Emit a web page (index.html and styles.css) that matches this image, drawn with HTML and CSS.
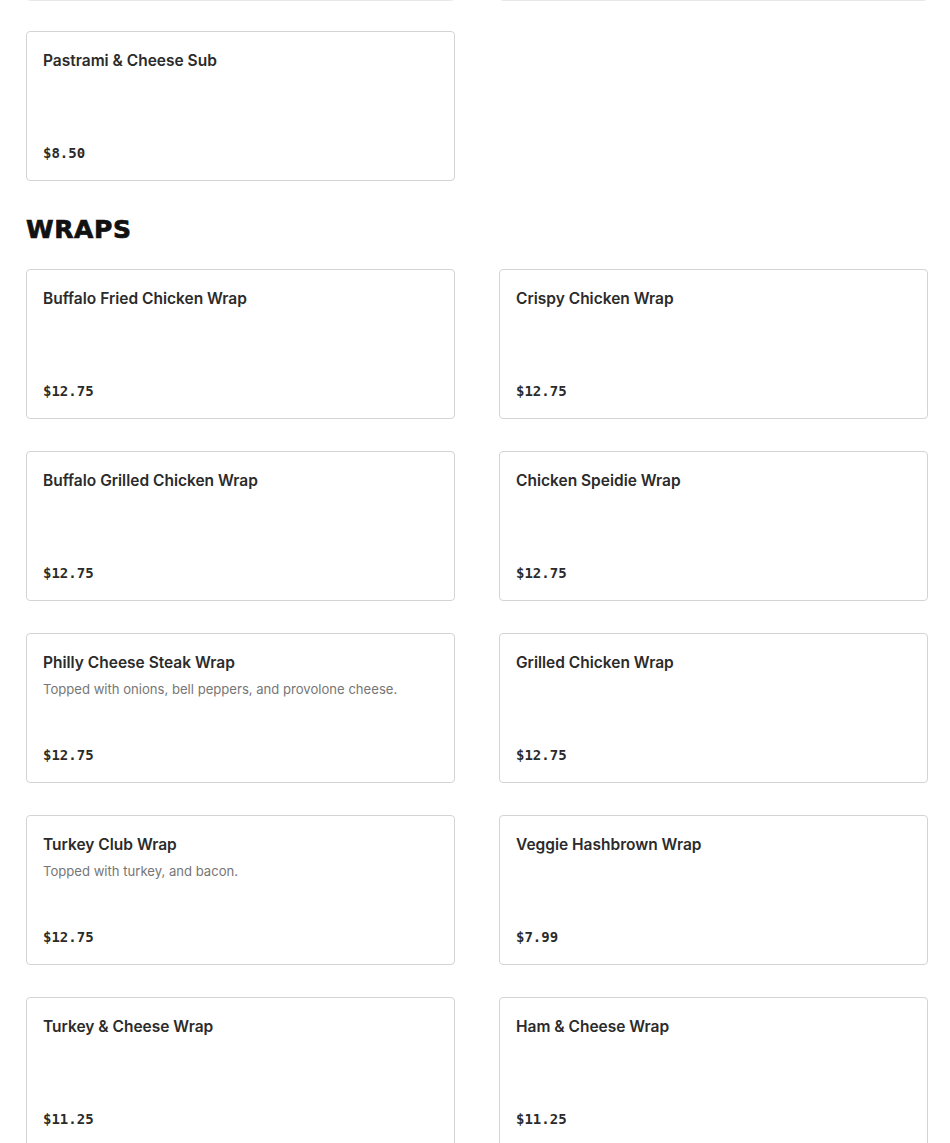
FILE: index.html
```html
<!DOCTYPE html>
<html lang="en">
<head>
<meta charset="utf-8">
<title>Menu - Wraps</title>
<link rel="stylesheet" href="styles.css">
</head>
<body>
<main class="menu">
  <section class="section section-prev">
    <div class="grid">
      <div class="card card-stub"></div>
      <div class="card card-stub"></div>
    </div>
    <div class="grid grid-after-stub">
      <div class="card">
        <div class="card-body">
          <h3 class="item-name">Pastrami &amp; Cheese Sub</h3>
        </div>
        <div class="price">$8.50</div>
      </div>
    </div>
  </section>

  <section class="section">
    <h2 class="section-title">WRAPS</h2>
    <div class="grid">
      <div class="card">
        <div class="card-body"><h3 class="item-name">Buffalo Fried Chicken Wrap</h3></div>
        <div class="price">$12.75</div>
      </div>
      <div class="card">
        <div class="card-body"><h3 class="item-name">Crispy Chicken Wrap</h3></div>
        <div class="price">$12.75</div>
      </div>
      <div class="card">
        <div class="card-body"><h3 class="item-name">Buffalo Grilled Chicken Wrap</h3></div>
        <div class="price">$12.75</div>
      </div>
      <div class="card">
        <div class="card-body"><h3 class="item-name">Chicken Speidie Wrap</h3></div>
        <div class="price">$12.75</div>
      </div>
      <div class="card">
        <div class="card-body">
          <h3 class="item-name">Philly Cheese Steak Wrap</h3>
          <p class="item-desc">Topped with onions, bell peppers, and provolone cheese.</p>
        </div>
        <div class="price">$12.75</div>
      </div>
      <div class="card">
        <div class="card-body"><h3 class="item-name">Grilled Chicken Wrap</h3></div>
        <div class="price">$12.75</div>
      </div>
      <div class="card">
        <div class="card-body">
          <h3 class="item-name">Turkey Club Wrap</h3>
          <p class="item-desc">Topped with turkey, and bacon.</p>
        </div>
        <div class="price">$12.75</div>
      </div>
      <div class="card">
        <div class="card-body"><h3 class="item-name">Veggie Hashbrown Wrap</h3></div>
        <div class="price">$7.99</div>
      </div>
      <div class="card">
        <div class="card-body"><h3 class="item-name">Turkey &amp; Cheese Wrap</h3></div>
        <div class="price">$11.25</div>
      </div>
      <div class="card">
        <div class="card-body"><h3 class="item-name">Ham &amp; Cheese Wrap</h3></div>
        <div class="price">$11.25</div>
      </div>
    </div>
  </section>
</main>
</body>
</html>
```

FILE: styles.css
```css
* { box-sizing: border-box; }

html, body {
  margin: 0;
  padding: 0;
  background: #ffffff;
}

body {
  font-family: Inter, "Noto Sans", "Liberation Sans", sans-serif;
  color: #262626;
  overflow: hidden;
}

.menu {
  width: 902px;
  margin-left: 26px;
  margin-top: -120px;
}

.grid {
  display: grid;
  grid-template-columns: 429px 429px;
  column-gap: 44px;
  row-gap: 32px;
}

.grid-after-stub {
  margin-top: 30px;
}

.card {
  height: 150px;
  border: 1px solid #d4d4d4;
  border-radius: 4px;
  padding: 16px 16px 17px;
  display: flex;
  flex-direction: column;
  justify-content: space-between;
  background: #fff;
}

.card-stub {
  height: 121px;
  border-color: #e8e8e8;
}

.card-body {
  display: flex;
  flex-direction: column;
}

.item-name {
  margin: 0;
  font-size: 15.5px;
  line-height: 26px;
  font-weight: 600;
  color: #2b2b2b;
}

.item-desc {
  margin: 3px 0 0;
  font-size: 13.1px;
  line-height: 20px;
  font-weight: 400;
  color: #767676;
}

.price {
  font-family: "DejaVu Sans Mono", "Liberation Mono", monospace;
  font-size: 14px;
  line-height: 20px;
  font-weight: 700;
  color: #2b2b2b;
}

.section-title {
  margin: 39px 0 29px;
  font-family: "DejaVu Sans", "Liberation Sans", sans-serif;
  font-size: 25px;
  line-height: 20px;
  font-weight: 900;
  letter-spacing: 0.6px;
  -webkit-text-stroke: 0.7px #111;
  color: #111;
}
```
